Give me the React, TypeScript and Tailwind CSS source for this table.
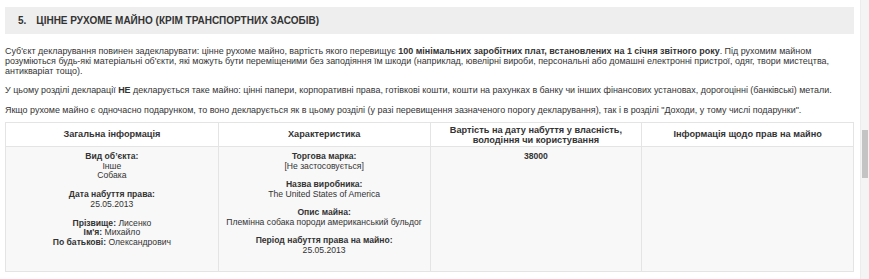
const INFO = [
  { label: 'Вид об\u2019єкта:', lines: ['Інше', 'Собака'] },
  { label: 'Дата набуття права:', lines: ['25.05.2013'] },
];

const CHARS = [
  { label: 'Торгова марка:', value: '[Не застосовується]' },
  { label: 'Назва виробника:', value: 'The United States of America' },
  { label: 'Опис майна:', value: 'Племінна собака породи американський бульдог' },
  { label: 'Період набуття права на майно:', value: '25.05.2013' },
];

export default function App() {
  return (
    <div className="flex w-[869px] h-[279px] overflow-hidden bg-white text-[#333] font-['Liberation_Sans',Arial,sans-serif]">
      <div className="w-[860px] pl-[5px] pr-[6px] pt-[7px]">
        <div className="h-[27px] flex items-center pl-[13px] bg-[#eeeeee] text-[10px] font-bold uppercase">
          <span>5.</span>
          <span className="ml-[10px]">Цінне рухоме майно (крім транспортних засобів)</span>
        </div>

        <div className="mt-[12px] text-[8.95px] leading-[10px]">
          <p>
            Суб'єкт декларування повинен задекларувати: цінне рухоме майно, вартість якого перевищує{' '}
            <b>100 мінімальних заробітних плат, встановлених на 1 січня звітного року</b>. Під рухомим майном
            розуміються будь-які матеріальні об'єкти, які можуть бути переміщеними без заподіяння їм шкоди (наприклад,
            ювелірні вироби, персональні або домашні електронні пристрої, одяг, твори мистецтва, антикваріат тощо).
          </p>
          <p className="mt-[9px]">
            У цьому розділі декларації <b>НЕ</b> декларується таке майно: цінні папери, корпоративні права, готівкові
            кошти, кошти на рахунках в банку чи інших фінансових установах, дорогоцінні (банківські) метали.
          </p>
          <p className="mt-[10px]">
            Якщо рухоме майно є одночасно подарунком, то воно декларується як в цьому розділі (у разі перевищення
            зазначеного порогу декларування), так і в розділі "Доходи, у тому числі подарунки".
          </p>
        </div>

        <div className="mt-[7px] grid grid-cols-4 border border-[#e4e4e4] text-center">
          <div className="h-[24px] flex items-center justify-center text-[9.2px] font-bold border-b border-[#e4e4e4]">
            Загальна інформація
          </div>
          <div className="h-[24px] flex items-center justify-center text-[9.2px] font-bold border-b border-l border-[#e4e4e4]">
            Характеристика
          </div>
          <div className="h-[24px] flex items-center justify-center text-[9.2px] leading-[10px] font-bold border-b border-l border-[#e4e4e4]">
            Вартість на дату набуття у власність,
            <br />
            володіння чи користування
          </div>
          <div className="h-[24px] flex items-center justify-center text-[9.2px] font-bold border-b border-l border-[#e4e4e4]">
            Інформація щодо прав на майно
          </div>

          <div className="h-[124px] bg-[#f8f8f8] pt-[5px] text-[8.6px] leading-[9.5px]">
            {INFO.map(g => (
              <div key={g.label} className="mb-[9.5px]">
                <div className="font-bold">{g.label}</div>
                {g.lines.map(l => (
                  <div key={l}>{l}</div>
                ))}
              </div>
            ))}
            <div>
              <b>Прізвище:</b> Лисенко
            </div>
            <div>
              <b>Ім'я:</b> Михайло
            </div>
            <div>
              <b>По батькові:</b> Олександрович
            </div>
          </div>
          <div className="h-[124px] bg-[#f8f8f8] pt-[5px] text-[8.6px] leading-[9.5px] border-l border-[#e4e4e4]">
            {CHARS.map(c => (
              <div key={c.label} className="mb-[9px]">
                <div className="font-bold">{c.label}</div>
                <div>{c.value}</div>
              </div>
            ))}
          </div>
          <div className="h-[124px] bg-[#f8f8f8] pt-[5px] text-[8.6px] leading-[9.5px] font-bold border-l border-[#e4e4e4]">
            38000
          </div>
          <div className="h-[124px] bg-[#f8f8f8] border-l border-[#e4e4e4]" />
        </div>
      </div>

      <div className="w-[9px] bg-[#f4f4f4] border-l border-[#ececec] pt-[130px] pl-[1px]">
        <div className="w-[6px] h-[48px] bg-[#c4c4c4]" />
      </div>
    </div>
  );
}
